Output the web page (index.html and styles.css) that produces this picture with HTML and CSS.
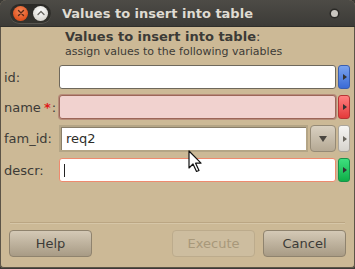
FILE: index.html
```html
<!DOCTYPE html>
<html lang="en">
<head>
  <meta charset="UTF-8">
  <title>Values to insert into table</title>
  <link rel="stylesheet" href="styles.css">
</head>
<body>
  <div class="window">
    <!-- Title bar -->
    <div class="titlebar">
      <div class="win-buttons">
        <span class="win-btn close">
          <svg width="8" height="8" viewBox="0 0 8 8"><path d="M1.5 1.5 L6.5 6.5 M6.5 1.5 L1.5 6.5" stroke="#5a2a18" stroke-width="1.4" stroke-linecap="round"/></svg>
        </span>
        <span class="win-btn restore">
          <svg width="8" height="6" viewBox="0 0 8 6"><path d="M1 4.5 L4 1.5 L7 4.5" fill="none" stroke="#6a6862" stroke-width="1.4" stroke-linecap="round"/></svg>
        </span>
      </div>
      <span class="title">Values to insert into table</span>
      <span class="resize-dot"></span>
    </div>

    <!-- Content -->
    <div class="content">
      <div class="header">
        <div class="heading"><b>Values to insert into table</b>:</div>
        <div class="subheading">assign values to the following variables</div>
      </div>

      <div class="fields">
        <div class="row">
          <label class="label" for="id">id:</label>
          <div class="field"><input class="entry" id="id" type="text"></div>
          <span class="side-btn blue"></span>
        </div>
        <div class="row">
          <label class="label" for="name">name <span class="req">*</span>:</label>
          <div class="field required"><input class="entry" id="name" type="text"></div>
          <span class="side-btn red"></span>
        </div>
        <div class="row tall">
          <label class="label" for="fam">fam_id:</label>
          <div class="field combo">
            <input class="entry" id="fam" type="text" value="req2">
            <span class="drop-btn"><svg width="10" height="8" viewBox="0 0 10 8"><path d="M1 1 H9 L5 7 Z" fill="#4a4640"/></svg></span>
          </div>
          <span class="side-btn grey"></span>
        </div>
        <div class="row">
          <label class="label" for="descr">descr:</label>
          <div class="field focused"><input class="entry" id="descr" type="text"><span class="caret"></span></div>
          <span class="side-btn green"></span>
        </div>
      </div>

      <div class="spacer"></div>
      <div class="separator"></div>

      <div class="actions">
        <button class="btn">Help</button>
        <div class="actions-right">
          <button class="btn" disabled>Execute</button>
          <button class="btn">Cancel</button>
        </div>
      </div>
    </div>
  </div>

  <!-- mouse pointer -->
  <svg class="pointer" width="16" height="24" viewBox="0 0 16 24">
    <path d="M1 1 L1 18 L5 14 L8.5 21.5 L11 20.5 L7.6 13.2 L13 13.2 Z" fill="#fff" stroke="#111" stroke-width="1.2" stroke-linejoin="round"/>
  </svg>
</body>
</html>
```

FILE: styles.css
```css
/* General */
body {
  margin: 0;
  padding: 0;
  width: 355px;
  height: 269px;
  background-color: #3c3b37;
  font-family: 'DejaVu Sans', 'Liberation Sans', sans-serif;
  color: #3c3b37;
  overflow: hidden;
}

.window {
  width: 355px;
  height: 268px;
  display: flex;
  flex-direction: column;
  border-radius: 6px 6px 4px 4px;
  overflow: hidden;
  background-color: #ccb996;
  box-shadow: inset 1px 0 0 #5c5447, inset -1px 0 0 #5c5447, inset 0 -1px 0 #5c5447;
}

/* Title bar */
.titlebar {
  height: 27px;
  flex: none;
  display: flex;
  align-items: center;
  background: linear-gradient(#4d4b46, #3c3b37);
  border-bottom: 1px solid #2f2e2a;
  box-sizing: border-box;
}

.win-buttons {
  display: flex;
  align-items: center;
  gap: 5px;
  margin-left: 10px;
  padding: 2px 3px;
  border-radius: 10px;
  background: linear-gradient(#2a2926, #35342f);
  box-shadow: 0 1px 0 #57554f;
}

.win-btn {
  width: 15px;
  height: 15px;
  border-radius: 50%;
  display: flex;
  align-items: center;
  justify-content: center;
}

.win-btn.close {
  background: radial-gradient(circle at 50% 35%, #f58a5a, #e0531f 70%);
}

.win-btn.restore {
  background: radial-gradient(circle at 50% 35%, #ffffff, #d8d6d0 75%);
}

.title {
  margin-left: 11px;
  font-size: 13px;
  font-weight: bold;
  color: #dfdbd2;
  flex: 1;
}

.resize-dot {
  width: 7px;
  height: 7px;
  margin-right: 17px;
  border-radius: 50%;
  background: #c9c6c0;
  box-shadow: 0 0 0 1.5px #2a2926;
}

/* Content */
.content {
  flex: 1;
  display: flex;
  flex-direction: column;
  padding: 0 5px 11px 4px;
}

.header {
  padding-left: 61px;
  padding-top: 1px;
}

.heading {
  font-size: 13px;
  line-height: 17px;
}

.subheading {
  font-size: 11px;
  line-height: 13px;
}

.fields {
  margin-top: 7px;
  display: flex;
  flex-direction: column;
  gap: 6px;
}

.row {
  display: flex;
  align-items: stretch;
  height: 24px;
}

.row.tall {
  height: 27px;
}

.label {
  width: 55px;
  flex: none;
  font-size: 13px;
  display: flex;
  align-items: center;
}

.req {
  color: #e01b1b;
  font-weight: bold;
  margin: 0 1px 0 3px;
}

.field {
  flex: 1;
  display: flex;
  position: relative;
}

.entry {
  flex: 1;
  min-width: 0;
  margin: 0;
  padding: 0 5px;
  border: 1px solid #6e685c;
  border-radius: 3px;
  background: #fff;
  font-family: inherit;
  font-size: 13px;
  color: #2e2d29;
  outline: none;
}

.field.required .entry {
  background: #f1d2cf;
  border-color: #9c6658;
  box-shadow: 0 0 0 1px #b78c7a;
}

.field.combo .entry {
  border: 2px solid #b4a586;
  border-radius: 0;
  box-shadow: inset 1px 1px 0 #8a7f6a;
}

.field.focused .entry {
  border-color: #ee8a6e;
}

.caret {
  position: absolute;
  left: 5px;
  top: 6px;
  width: 1px;
  height: 13px;
  background: #222;
}

.drop-btn {
  width: 26px;
  margin-left: 2px;
  flex: none;
  display: flex;
  align-items: center;
  justify-content: center;
  border: 1px solid #958a76;
  border-radius: 4px;
  box-sizing: border-box;
  background: linear-gradient(#d9d0c1, #b5a994);
}

.side-btn {
  width: 12px;
  flex: none;
  margin-left: 2px;
  border-radius: 3px;
  box-sizing: border-box;
  position: relative;
}

.side-btn::after {
  content: "";
  position: absolute;
  left: 4px;
  top: 50%;
  margin-top: -3px;
  border-left: 4px solid #333;
  border-top: 3px solid transparent;
  border-bottom: 3px solid transparent;
}

.side-btn.blue {
  background: linear-gradient(#7aa3ef, #3b6bd6);
  border: 1px solid #3a5fb0;
}

.side-btn.red {
  background: linear-gradient(#ff8080, #e43a3a);
  border: 1px solid #b73535;
}

.side-btn.grey {
  background: linear-gradient(#f6f5f3, #d6d3cd);
  border: 1px solid #aaa59c;
}

.side-btn.grey::after {
  border-left-color: #6a665e;
}

.side-btn.green {
  background: linear-gradient(#3ee07e, #0fae48);
  border: 1px solid #17934a;
}

.spacer {
  flex: 1;
}

/* Bottom buttons */
.separator {
  height: 1px;
  margin: 0 5px 0 6px;
  background: #bba683;
  box-shadow: 0 1px 0 #d6c6a7;
}

.actions {
  margin-top: 7px;
  display: flex;
  justify-content: space-between;
  padding: 0 4px 0 5px;
}

.actions-right {
  display: flex;
  gap: 8px;
}

.btn {
  width: 83px;
  height: 27px;
  padding: 0;
  border: 1px solid #8f836e;
  border-radius: 4px;
  background: linear-gradient(#d4c9b6, #a89b85);
  font-family: inherit;
  font-size: 13px;
  color: #3c3b37;
}

.btn:disabled {
  background: #cdbd9f;
  border-color: #bcab8c;
  color: #a8987a;
}

/* Pointer over content */
.pointer {
  position: absolute;
  left: 188px;
  top: 150px;
}
```
